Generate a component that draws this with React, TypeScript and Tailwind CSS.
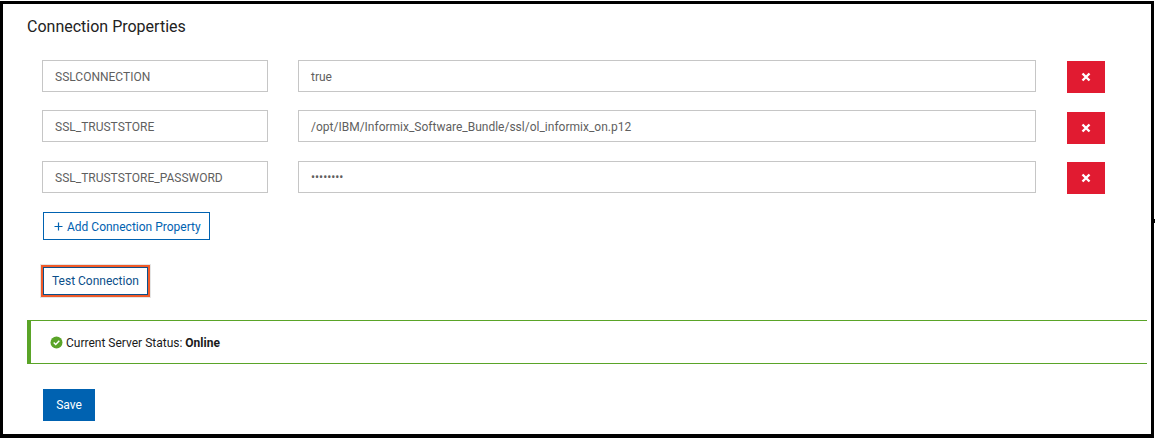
import React from "react";

const rows = [
  { name: "SSLCONNECTION", value: "true", mt: "mt-[21px]", btn: "mt-px", vp: "pt-px" },
  { name: "SSL_TRUSTSTORE", value: "/opt/IBM/Informix_Software_Bundle/ssl/ol_informix_on.p12", mt: "mt-[17px]", btn: "mt-[2px]", vp: "pt-px" },
  { name: "SSL_TRUSTSTORE_PASSWORD", value: "••••••••", mt: "mt-[17px]", btn: "mt-px", vp: "pb-px" },
];

function X() {
  return (
    <svg width="10" height="10" viewBox="0 0 10 10" aria-hidden="true">
      <path d="M1.5 1.5 L8.5 8.5 M8.5 1.5 L1.5 8.5" stroke="#fff" strokeWidth="2.4" fill="none" />
    </svg>
  );
}

export default function App() {
  return (
    <div className="relative w-[1155px] h-[438px] bg-white overflow-hidden font-['Roboto',sans-serif] pt-px pr-px">
      <div className="absolute left-[1154px] top-[219px] w-px h-[4px] bg-black" />
      <div className="w-[1154px] h-[437px] border-t-[3px] border-l-[3px] border-r-[3px] border-b-[4px] border-black pl-[24px] pt-[11px]">
        <h2 className="text-[16px] leading-[24px] text-[#222] font-normal">Connection Properties</h2>
        <div className="pl-[15px]">
          {rows.map((r) => (
            <div key={r.name} className={`flex items-start ${r.mt}`}>
              <div className="w-[226px] h-[32px] border border-[#c6c6c6] flex items-center pl-[12px] pt-px text-[12px] text-[#5f5f5f]">
                {r.name}
              </div>
              <div className={`w-[738px] h-[32px] ml-[30px] border border-[#c6c6c6] flex items-center pl-[12px] text-[12px] text-[#5f5f5f] ${r.vp}`}>
                {r.value}
              </div>
              <div className={`w-[38px] h-[32px] ml-[31px] bg-[#e11b31] flex items-center justify-center ${r.btn}`}>
                <X />
              </div>
            </div>
          ))}
          <div className="mt-[18px] ml-px w-[167px] h-[28px] border border-[#0062b1] flex items-center pl-[10px] pt-px text-[12px] text-[#0062b1]">
            <svg width="9" height="9" viewBox="0 0 9 9" className="mr-[4px]" aria-hidden="true">
              <path d="M4.5 0.5 V8.5 M0.5 4.5 H8.5" stroke="#0062b1" strokeWidth="1.2" fill="none" />
            </svg>
            Add Connection Property
          </div>
          <div className="mt-[25px] -ml-px w-[109px] h-[32px] border-[2px] border-[#f05a28] shadow-[0_0_0_1px_#e5e5e5]">
            <div className="w-full h-full border border-[#0b4f8a] flex items-center pl-[8px] text-[12px] text-[#0b4f8a]">
              Test Connection
            </div>
          </div>
        </div>
        <div className="mt-[23px] w-[1120px] h-[44px] border-y border-[#5aa428] border-l-[4px] flex items-center pl-[19px] pt-px text-[12px] text-[#1a1a1a]">
          <svg width="13" height="13" viewBox="0 0 13 13" className="mr-[3px]" aria-hidden="true">
            <circle cx="6.5" cy="6.5" r="6" fill="#5aa428" />
            <path d="M3.7 6.6 L5.7 8.5 L9.3 4.7" stroke="#fff" strokeWidth="1.4" fill="none" />
          </svg>
          <span>Current Server Status:&nbsp;</span>
          <span className="font-bold">Online</span>
        </div>
        <div className="mt-[25px] ml-[16px] w-[52px] h-[32px] bg-[#0062b1] flex items-center justify-center text-[12px] text-white">
          Save
        </div>
      </div>
    </div>
  );
}
